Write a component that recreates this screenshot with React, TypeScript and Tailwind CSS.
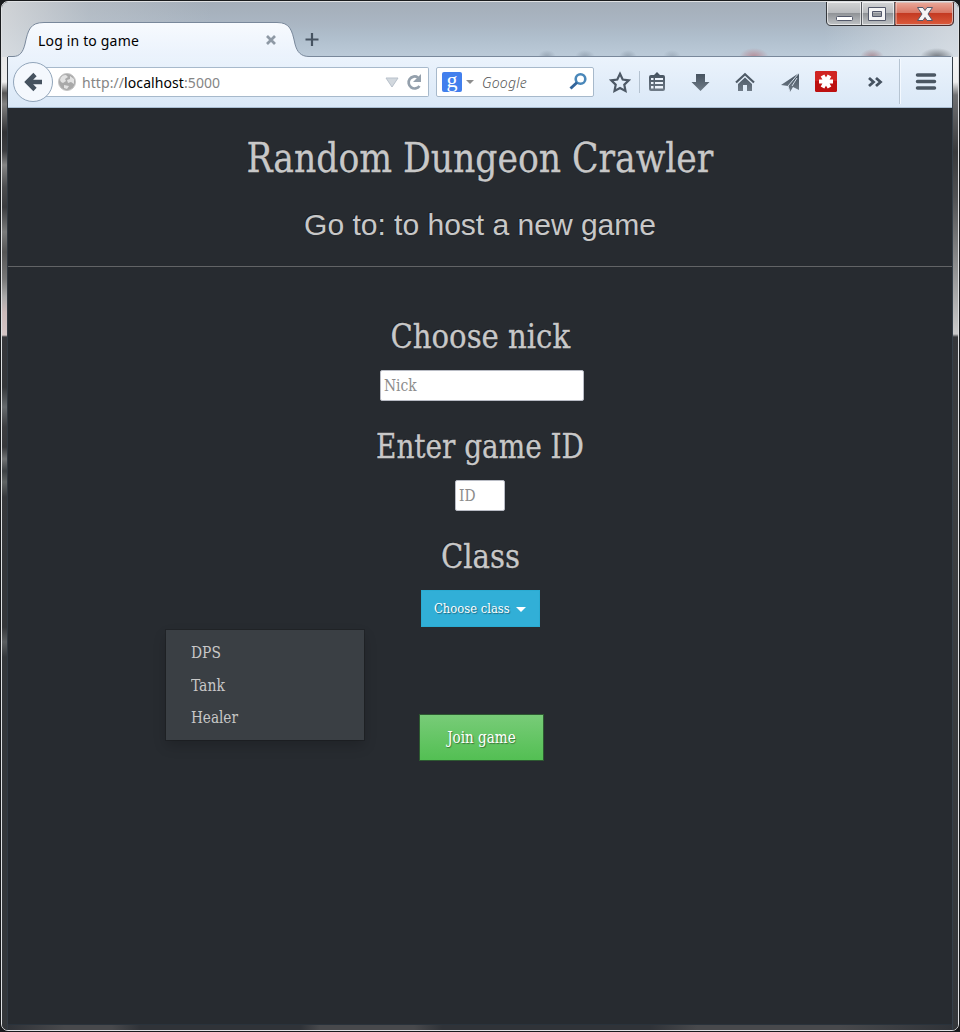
import React from "react";

const slab = "font-['DejaVu_Serif_Condensed','DejaVu_Serif',serif] [font-stretch:condensed]";
const shade = "[text-shadow:1px_1px_1px_rgba(0,0,0,0.4)]";
const heading = "[-webkit-text-stroke:0.3px_#c8c8c8] [text-shadow:-1px_-1px_0_rgba(0,0,0,0.3)]";

function WindowButtons() {
  return (
    <svg width="130" height="25" viewBox="0 0 130 25" className="shrink-0">
      <defs>
        <linearGradient id="gray" x1="0" y1="0" x2="0" y2="1">
          <stop offset="0" stopColor="#d5d6d7" />
          <stop offset=".48" stopColor="#b9bbbe" />
          <stop offset=".5" stopColor="#8f9296" />
          <stop offset="1" stopColor="#c2c5c8" />
        </linearGradient>
        <linearGradient id="red" x1="0" y1="0" x2="0" y2="1">
          <stop offset="0" stopColor="#e9aa9b" />
          <stop offset=".48" stopColor="#d87563" />
          <stop offset=".5" stopColor="#c43a22" />
          <stop offset="1" stopColor="#dc5b3c" />
        </linearGradient>
      </defs>
      <g transform="translate(0 -1)">
        <path d="M.5 0V20Q.5 24.500 5 24.500H123Q127.500 24.500 127.500 20V0Z" fill="url(#gray)" stroke="#35383d" />
        <path d="M69 1V24H123Q127 24 127 20V1Z" fill="url(#red)" stroke="#6b1d16" />
        <path d="M1.500 1.500V20Q1.500 23.500 5 23.500H34.500V1.500ZM36.500 1.500V23.500H67.500V1.500ZM70 1.500V23.500H123Q126.500 23.500 126.500 20V1.500Z" fill="none" stroke="#fff" strokeOpacity=".6" />
        <path d="M35.500 0V24M68.500 0V24" stroke="#55585e" />
        <rect x="10.500" y="15.500" width="16" height="4" rx="1" fill="#fff" stroke="#53586a" />
        <path d="M43 6.500H59.500V19.500H42.500V6.500ZM46.500 10.500V15.500H55.500V10.500Z" fill="#f5f5f5" fillRule="evenodd" stroke="#53586a" />
        <path d="M91.500 6.500H97L99 9.500L101 6.500H106.500L102 13L106.500 19.500H101L99 16.500L97 19.500H91.500L96 13Z" fill="#f5f5f5" stroke="#53586a" />
      </g>
    </svg>
  );
}

function TitleBar() {
  return (
    <header className="relative h-[55px] shrink-0 bg-[linear-gradient(180deg,#a4aeb9_0%,#aab6c3_40%,#b0bfcd_65%,#bccbd9_100%)]">
      <div className="absolute inset-0 bg-[linear-gradient(90deg,rgba(226,226,226,0.7)_0%,rgba(200,205,210,0.4)_9%,transparent_22%,transparent_86%,rgba(225,228,232,0.65)_99%)]" />
      <div className="absolute bottom-0 left-0 right-0 h-3 overflow-hidden">
        <div className="h-8 bg-[radial-gradient(ellipse_9px_7px_at_545px_12px,#78869590,transparent),radial-gradient(ellipse_10px_7px_at_583px_12px,#78869590,transparent),radial-gradient(ellipse_9px_7px_at_626px_12px,#78869590,transparent),radial-gradient(ellipse_9px_7px_at_670px_12px,#78869570,transparent),radial-gradient(ellipse_15px_9px_at_752px_12px,#b58b96,transparent),radial-gradient(ellipse_12px_8px_at_870px_12px,#a98b94,transparent),radial-gradient(ellipse_17px_9px_at_935px_12px,#70757c,transparent)]" />
      </div>
      <svg className="absolute left-[5px] top-[19px]" width="948" height="37" viewBox="0 0 948 37">
        <defs>
          <linearGradient id="tab" x1="0" y1="0" x2="0" y2="1">
            <stop stopColor="#f7fafe" />
            <stop offset="1" stopColor="#eaf2fc" />
          </linearGradient>
        </defs>
        <path d="M1 37V35.500H6C13 35.500 16 31 18 23C21 9 23 1.500 37 1.500H270C283 1.500 285 9 288 23C290 31 294 35.500 302 35.500H943V37Z" fill="url(#tab)" />
        <path d="M1 35.500H6C13 35.500 16 31 18 23C21 9 23 1.500 37 1.500H270C283 1.500 285 9 288 23C290 31 294 35.500 302 35.500H944" fill="none" stroke="#79889b" />
        <path d="M260 15l8 8m0-8l-8 8" stroke="#8e99a5" strokeWidth="2.700" />
        <path d="M298.500 18.500h13M305 12v13" stroke="#465361" strokeWidth="2.200" />
      </svg>
      <div className="relative flex h-full items-start justify-between pl-9 pr-[2px]">
        <span className="mt-[29px] whitespace-nowrap text-[14px] leading-5 tracking-[0.17px] text-black">Log in to game</span>
        <WindowButtons />
      </div>
    </header>
  );
}

function ToolIcons() {
  return (
    <svg width="346" height="50" viewBox="606 57 346 50" className="shrink-0">
      <defs>
        <linearGradient id="steel" x1="0" y1="70" x2="0" y2="94" gradientUnits="userSpaceOnUse">
          <stop stopColor="#3d4a57" />
          <stop offset="1" stopColor="#76828e" />
        </linearGradient>
      </defs>
      <path d="M620 73.800l2.700 5.700 6.100.8-4.500 4.400 1.200 6.300-5.500-3-5.500 3 1.200-6.300-4.500-4.400 6.100-.8Z" fill="none" stroke="#4d5966" strokeWidth="2.200" />
      <path d="M639.500 71V93" stroke="#b4c2d0" />
      <path d="M651 75h3l3-3 3 3h3q2 0 2 2v12q0 2-2 2h-12q-2 0-2-2V77q0-2 2-2Z" fill="url(#steel)" />
      <path d="M651 78h2.500v2H651ZM655 78h8v2h-8ZM651 82h2.500v2H651ZM655 82h8v2h-8ZM651 86h2.500v2.500H651ZM655 86h8v2.500h-8Z" fill="#edf4fc" />
      <path d="M696 74h9v8h4.500l-9 9-9-9H696Z" fill="url(#steel)" />
      <path d="M736 82.500L745 74.200L754 82.500" fill="none" stroke="#4f5b67" strokeWidth="2.200" />
      <path d="M738 84l7-6.500 7 6.500v7h-5v-6h-4v6h-5Z" fill="url(#steel)" />
      <path d="M799 73v17l-6-3-3 5-2-6-7-1Z" fill="url(#steel)" />
      <path d="M799 73l-11 13 2 6M797 78l-5 8" fill="none" stroke="#d5e0ec" strokeWidth="1" />
      <rect x="815" y="71" width="22" height="21" rx="1.500" fill="#bd1010" />
      <path d="M815 73q0-2 2-2h18q2 0 2 2v8H815Z" fill="#d02422" />
      <path d="M826 81.500H819M826 81.500H833M826 81.500L822.500 75.500M826 81.500L829.500 75.500M826 81.500L822.500 87.500M826 81.500L829.500 87.500" stroke="white" strokeWidth="4.200" />
      <path d="M869 78l4.500 4-4.500 4M876 78l4.500 4-4.500 4" fill="none" stroke="#465361" strokeWidth="2.800" />
      <path d="M899.500 59V104" stroke="#b6c4d2" />
      <path d="M900.500 59V104" stroke="#f4f9ff" />
      <path d="M917.500 75h17M917.500 81.500h17M917.500 88h17" stroke="#4b5763" strokeWidth="3.500" strokeLinecap="round" />
    </svg>
  );
}

function Toolbar() {
  return (
    <nav className="relative flex h-[51px] shrink-0 items-center border-b border-[#a9bdd2] bg-[linear-gradient(180deg,#ebf3fc,#dae8f7)]">
      <svg width="74" height="50" viewBox="8 57 74 50" className="z-10 shrink-0">
        <path d="M45 67.500H84V96.500H45Z" fill="white" />
        <path d="M45 67.500H84M45 96.500H84" stroke="#a7b9cb" />
        <circle cx="33" cy="82" r="19.500" fill="#f4f8fd" stroke="#91a5ba" />
        <path d="M42 82H28M35 74.500l-7.500 7.500 7.500 7.500" fill="none" stroke="#45525f" strokeWidth="4.600" />
        <circle cx="67" cy="82" r="8.500" fill="#a9a9a9" stroke="#c5c5c5" />
        <path d="M60 80q1-5 6-5l2 2-3 2 1 2-3 2-2-1ZM70 76l4 3v5l-3-2-3 1-1-3 3-1ZM64 85l5 1-2 3-3-1Z" fill="#e2e2e2" />
      </svg>
      <div className="flex h-[30px] w-[347px] items-center justify-between rounded-r-[2px] border border-l-0 border-[#a7b9cb] bg-white pr-[5px]">
        <span className="mt-px whitespace-nowrap text-[14px] tracking-[0.08px] text-[#858585]">http://<span className="text-black">localhost</span>:5000</span>
        <svg width="38" height="20" viewBox="0 0 38 20">
          <path d="M1 6h12l-6 9Z" fill="#d2d8de" stroke="#b8c1cb" />
          <path d="M33 5.500A6 6 0 1 0 34.500 14" fill="none" stroke="#94a0ac" strokeWidth="2.700" />
          <path d="M36 2v8h-8Z" fill="#94a0ac" />
        </svg>
      </div>
      <div className="ml-[7px] mr-3 flex h-[30px] w-[158px] shrink-0 items-center rounded-[2px] border border-[#a7b9cb] bg-white pl-[5px]">
        <span className="flex h-5 w-5 items-start justify-center rounded-[2px] bg-[#427fed] font-['Liberation_Serif',serif] text-[22px] leading-[15px] text-white">g</span>
        <svg width="9" height="6" viewBox="0 0 9 6" className="ml-1"><path d="M0 1h8L4 5Z" fill="#8d8d8d" /></svg>
        <span className="ml-[7px] mt-px text-[14px] font-light italic tracking-[0.2px] text-[#555]">Google</span>
        <svg width="20" height="20" viewBox="0 0 20 20" className="ml-auto mr-[5px]">
          <circle cx="12.500" cy="7" r="4.800" fill="none" stroke="#4987b9" strokeWidth="2.600" />
          <path d="M9 10.500L2.500 16.500" stroke="#33659b" strokeWidth="3" />
        </svg>
      </div>
      <ToolIcons />
    </nav>
  );
}

function Fit({ children, className }: { children: React.ReactNode; className: string }) {
  return <span className={`inline-block whitespace-nowrap ${className}`}>{children}</span>;
}

function GamePage() {
  return (
    <main className={`flex min-h-0 flex-1 flex-col bg-[#272b30] text-[#c8c8c8] ${slab}`}>
      <section className="flex h-[159px] shrink-0 flex-col items-center border-b border-[#626466] text-center">
        <h1 className={`mt-[25px] h-[50px] text-[41px] leading-[50px] ${heading}`}>
          <Fit className="scale-x-[0.938]">Random Dungeon Crawler</Fit>
        </h1>
        <h2 className="mt-[22px] font-['Liberation_Sans',sans-serif] text-[30px] leading-10 [font-stretch:normal] [text-shadow:-1px_-1px_0_rgba(0,0,0,0.3)]">Go to: to host a new game</h2>
      </section>
      <form className="flex flex-col items-center">
        <h2 className={`mt-[49px] h-10 text-[34px] leading-10 ${heading}`}><Fit className="scale-x-[0.952]">Choose nick</Fit></h2>
        <div className="ml-1 mt-[14px] flex h-[31px] w-[204px] items-center rounded-[2px] border border-[#b9bcc5] bg-white px-[3px] text-[16px] text-[#8c8c8c]"><Fit className="origin-left scale-x-[0.96]">Nick</Fit></div>
        <h2 className={`mt-[25px] h-10 text-[34px] leading-10 ${heading}`}><Fit className="scale-x-[0.912]">Enter game ID</Fit></h2>
        <div className="mt-[14px] flex h-[31px] w-[50px] items-center rounded-[2px] border border-[#b9bcc5] bg-white px-[3px] text-[16px] text-[#8c8c8c]"><Fit className="origin-left scale-x-[0.96]">ID</Fit></div>
        <h2 className={`mt-[25px] h-10 text-[34px] leading-10 ${heading}`}><Fit className="scale-x-[0.953]">Class</Fit></h2>
        <button type="button" className={`relative mt-[14px] h-[37px] w-[119px] border border-[#2aabd2] bg-[#31afd7] text-white ${shade}`}>
          <span className="flex items-center pl-3 text-[13px]"><Fit className="origin-left scale-x-[0.99]">Choose class</Fit></span>
          <svg width="10" height="5" viewBox="0 0 10 5" className="absolute left-[94px] top-4"><path d="M0 0h10L5 5Z" fill="white" /></svg>
        </button>
        <div className="flex w-full items-start">
          <ul className="ml-[158px] mt-[3px] h-[110px] w-[198px] bg-[#3a3f44] pl-[25px] pt-[7px] text-[16px] leading-[32.500px] shadow-[0_6px_12px_rgba(0,0,0,0.18),0_0_0_1px_rgba(0,0,0,0.15)]">
            <li><Fit className="origin-left scale-x-[0.96]">DPS</Fit></li>
            <li><Fit className="origin-left scale-x-[0.97]">Tank</Fit></li>
            <li><Fit className="origin-left scale-x-[0.945]">Healer</Fit></li>
          </ul>
          <button type="button" className={`ml-[55px] mt-[87px] h-[47px] w-[125px] border border-[#2d5931] bg-[linear-gradient(180deg,#78cc78,#53bf53)] text-[16px] text-white ${shade}`}><Fit className="scale-x-[0.94]">Join game</Fit></button>
        </div>
      </form>
    </main>
  );
}

export default function App() {
  return (
    <div className="h-[1032px] w-[960px] overflow-hidden bg-[#191b1d] p-px font-['Noto_Sans',sans-serif]">
      <div className="flex h-[1030px] flex-col overflow-hidden rounded-[7px] border border-[#dfe1e3]">
        <TitleBar />
        <div className="flex min-h-0 flex-1">
          <div className="w-[6px] shrink-0 border-r border-[#333b44] bg-[linear-gradient(180deg,#e8e8e8_0px,#eee_25px,#555_36px,#828282_47px,#303134_75px,#3c3d40_94px,#858585_108px,#4b4c4e_130px,#3a3b3e_150px,#7a7b7b_175px,#555_195px,#777_222px,#aaa_240px,#cbbaba_255px,#d4c5c5_278px,#35363a_280px,#343639_330px,#666a6d_350px,#3b3c3f_370px,#37383b_390px,#707273_402px,#3d4144_414px,#606464_425px,#36383b_440px,#343639_500px,#343639_570px,#5b5e60_585px,#34373a_600px)]" />
          <div className="flex w-[944px] shrink-0 flex-col">
            <Toolbar />
            <GamePage />
            <div className="h-[6px] shrink-0 border-t border-[#29323b] bg-[linear-gradient(90deg,#303338_0%,#48494c_6%,#48494c_11%,#303338_14%,#303338_31%,#48494c_33%,#48494c_43%,#303338_46%,#303338_68%,#48494c_73%,#48494c_88%,#303338_100%)]" />
          </div>
          <div className="w-[6px] shrink-0 border-l border-[#35404a] bg-[linear-gradient(180deg,#f5f5f5_0px,#eee_25px,#707173_38px,#38393b_95px,#505153_140px,#858687_200px,#cacaca_277px,#35373a_280px,#3d3f41_400px,#34373a_100%)]" />
        </div>
      </div>
    </div>
  );
}
